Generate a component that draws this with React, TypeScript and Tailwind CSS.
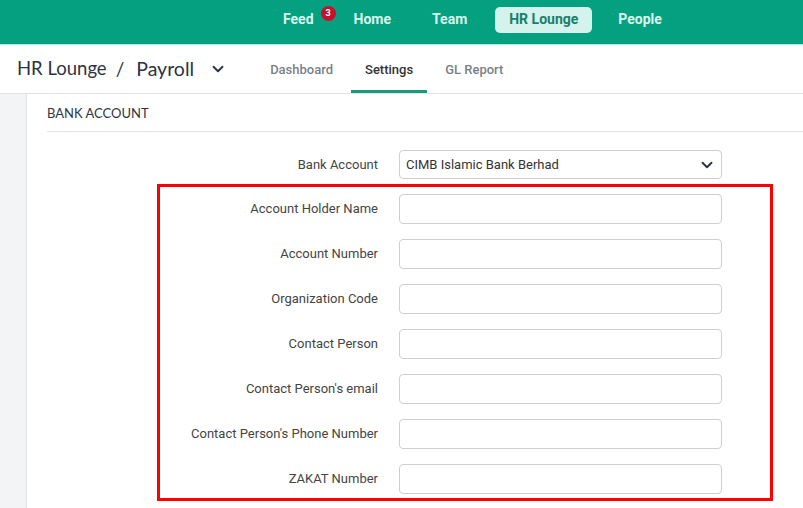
import { ChevronDown } from 'lucide-react';

const fields = [
  'Account Holder Name',
  'Account Number',
  'Organization Code',
  'Contact Person',
  "Contact Person's email",
  "Contact Person's Phone Number",
  'ZAKAT Number',
];

function FieldRow({ label }: { label: string }) {
  return (
    <div className="flex items-center">
      <label className="w-[218px] shrink-0 text-right text-[13px] text-[#444]">{label}</label>
      <input
        type="text"
        className="ml-[21px] h-[30px] w-[323px] rounded-[4px] border border-[#cfcfcf] bg-white px-2 outline-none"
      />
    </div>
  );
}

export default function App() {
  return (
    <div className="flex h-[508px] w-[803px] flex-col overflow-hidden bg-white font-['Roboto',sans-serif]">
      {/* top nav */}
      <header className="flex h-[45px] shrink-0 items-center border-b border-[#a7eedd] bg-[#05a07f] pb-[5px] pl-[283px]">
        <div className="flex items-start">
          <span className="text-[14px] font-bold text-[#d9f7ef]">Feed</span>
          <span className="ml-[7px] mt-[-3px] flex h-[15px] w-[15px] items-center justify-center rounded-full bg-[#c8102e] text-[9px] font-bold text-white">
            3
          </span>
        </div>
        <span className="ml-[18px] text-[14px] font-bold text-[#d9f7ef]">Home</span>
        <span className="ml-[41px] text-[14px] font-bold text-[#d9f7ef]">Team</span>
        <span className="ml-[28px] flex h-[26px] w-[97px] items-center justify-center rounded-[5px] bg-[#d3f3ec] text-[14px] font-bold text-[#18806b]">
          HR Lounge
        </span>
        <span className="ml-[26px] text-[14px] font-bold text-[#d9f7ef]">People</span>
      </header>

      {/* breadcrumb + tabs */}
      <div className="flex h-[49px] shrink-0 items-stretch border-b border-[#e3e3e3]">
        <div className="flex items-center pl-[17px] font-['Lato',sans-serif] text-[#2d3340]">
          <span className="text-[18.5px]">HR Lounge</span>
          <span className="ml-[9px] text-[19px]">/</span>
          <span className="ml-[12px] text-[19.5px]">Payroll</span>
          <ChevronDown className="ml-[15px] h-[18px] w-[18px]" strokeWidth={2.5} />
        </div>
        <div className="ml-[29px] flex items-stretch pt-[4px]">
          <span className="mr-[4px] flex items-center border-b-[3px] border-transparent px-[14px] text-[13px] font-medium text-[#7b7f88]">
            Dashboard
          </span>
          <span className="flex items-center border-b-[3px] border-[#179a80] px-[14px] text-[13px] font-medium text-[#333]">
            Settings
          </span>
          <span className="flex items-center border-b-[3px] border-transparent px-[18px] text-[13px] font-medium text-[#7b7f88]">
            GL Report
          </span>
        </div>
      </div>

      {/* body */}
      <div className="flex flex-1">
        <aside className="w-[27px] shrink-0 border-r border-[#e2e2e2] bg-[#f3f4f5]" />
        <main className="flex-1 pl-[20px]">
          <div className="flex h-[38px] items-center border-b border-[#e3e3e3] pt-[3px] font-['Lato',sans-serif] text-[13px] text-[#2f3542]">
            BANK ACCOUNT
          </div>

          <div className="mt-[18px] flex items-center pl-[113px]">
            <label className="w-[218px] shrink-0 text-right text-[13px] text-[#444]">Bank Account</label>
            <div className="ml-[21px] flex h-[29px] w-[323px] items-center justify-between rounded-[4px] border border-[#cfcfcf] bg-white pl-[6px] pr-[5px]">
              <span className="text-[13px] text-[#333]">CIMB Islamic Bank Berhad</span>
              <ChevronDown className="h-[18px] w-[18px] text-[#2d3340]" strokeWidth={2.5} />
            </div>
          </div>

          <div className="ml-[110px] mt-[5px] flex w-[616px] flex-col gap-[15px] border-[3px] border-[#ff0000] pb-[4px] pt-[7px]">
            {fields.map((f) => (
              <FieldRow key={f} label={f} />
            ))}
          </div>
        </main>
      </div>
    </div>
  );
}
